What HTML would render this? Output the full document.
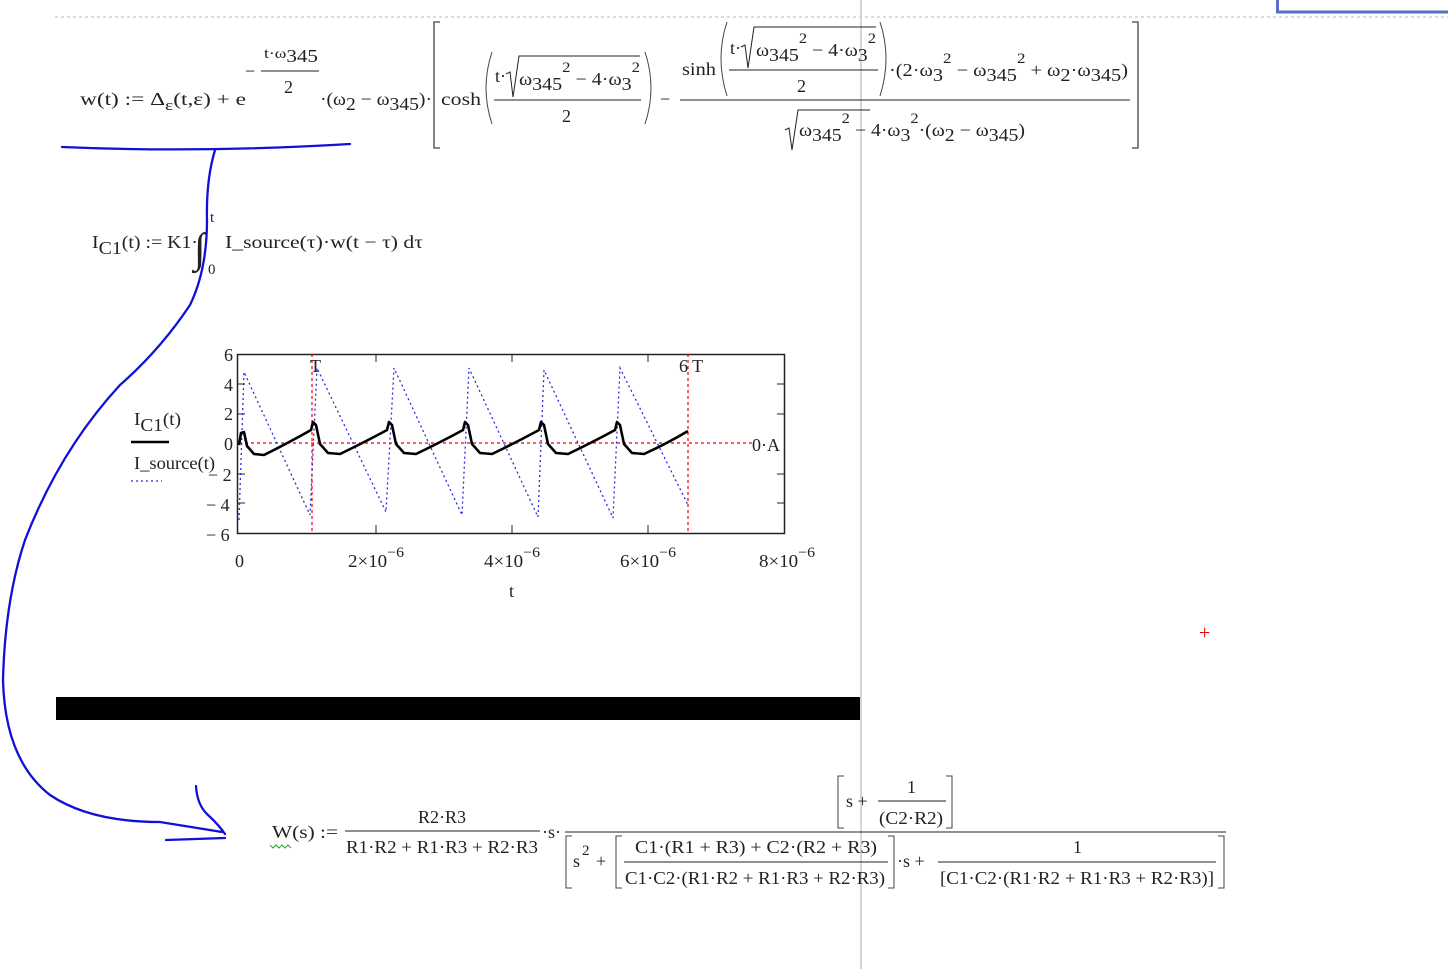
<!DOCTYPE html>
<html><head><meta charset="utf-8"><style>
html,body{margin:0;padding:0;background:#fff;width:1448px;height:969px;overflow:hidden}
svg{display:block}
text{font-family:"Liberation Serif",serif;fill:#222;font-size:18px}
.b{font-size:15px}
</style></head><body>
<svg width="1448" height="969" viewBox="0 0 1448 969" xmlns="http://www.w3.org/2000/svg">
<line x1="55" y1="17" x2="1448" y2="17" stroke="#bbb" stroke-dasharray="3,3"/>
<rect x="1277.5" y="-2" width="172" height="14" fill="#fff" stroke="#5a70c8" stroke-width="3"/>
<line x1="861" y1="0" x2="861" y2="969" stroke="#c8c8c8" stroke-width="1.5"/>

<!-- top formula -->
<text x="80" y="105" textLength="166" lengthAdjust="spacingAndGlyphs">w(t) := Δ<tspan dy="5" class="b">ε</tspan><tspan dy="-5">(t,ε) + e</tspan></text>
<text x="245" y="77">−</text>
<text x="264" y="58" textLength="54" lengthAdjust="spacingAndGlyphs"><tspan class="b">t·ω</tspan><tspan dy="4">345</tspan></text>
<line x1="261" y1="71" x2="319" y2="71" stroke="#222"/>
<text x="284" y="93">2</text>
<text x="320" y="105" textLength="112" lengthAdjust="spacingAndGlyphs">·(ω<tspan dy="5">2</tspan><tspan dy="-5"> − ω</tspan><tspan dy="5">345</tspan><tspan dy="-5">)·</tspan></text>
<path d="M440 22 L434 22 L434 148 L440 148" fill="none" stroke="#444" stroke-width="1.3"/>
<text x="441" y="105" textLength="40" lengthAdjust="spacingAndGlyphs">cosh</text>
<path d="M492 52 Q480 88 492 124" fill="none" stroke="#444"/>
<text x="495" y="82">t·</text>
<path d="M506 74 L510 72 L513 97 L519 56 L640 56" fill="none" stroke="#222"/>
<text x="519" y="85" textLength="121" lengthAdjust="spacingAndGlyphs">ω<tspan dy="5">345</tspan><tspan dy="-18" class="b">2</tspan><tspan dy="13"> − 4·ω</tspan><tspan dy="5">3</tspan><tspan dy="-18" class="b">2</tspan></text>
<line x1="494" y1="100" x2="641" y2="100" stroke="#222"/>
<text x="562" y="122">2</text>
<path d="M645 52 Q657 88 645 124" fill="none" stroke="#444"/>
<text x="660" y="105">−</text>
<text x="682" y="75" textLength="34" lengthAdjust="spacingAndGlyphs">sinh</text>
<path d="M727 22 Q715 58 727 96" fill="none" stroke="#444"/>
<text x="730" y="54">t·</text>
<path d="M741 47 L745 45 L748 68 L754 27 L876 27" fill="none" stroke="#222"/>
<text x="756" y="56" textLength="120" lengthAdjust="spacingAndGlyphs">ω<tspan dy="5">345</tspan><tspan dy="-18" class="b">2</tspan><tspan dy="13"> − 4·ω</tspan><tspan dy="5">3</tspan><tspan dy="-18" class="b">2</tspan></text>
<line x1="729" y1="70" x2="878" y2="70" stroke="#222"/>
<text x="797" y="92">2</text>
<path d="M880 22 Q892 58 880 96" fill="none" stroke="#444"/>
<text x="889" y="76" textLength="239" lengthAdjust="spacingAndGlyphs">·(2·ω<tspan dy="5">3</tspan><tspan dy="-18" class="b">2</tspan><tspan dy="13"> − ω</tspan><tspan dy="5">345</tspan><tspan dy="-18" class="b">2</tspan><tspan dy="13"> + ω</tspan><tspan dy="5">2</tspan><tspan dy="-5">·ω</tspan><tspan dy="5">345</tspan><tspan dy="-5">)</tspan></text>
<line x1="680" y1="100" x2="1130" y2="100" stroke="#222"/>
<path d="M785 130 L789 128 L792 150 L798 110 L870 110" fill="none" stroke="#222"/>
<text x="799" y="136" textLength="226" lengthAdjust="spacingAndGlyphs">ω<tspan dy="5">345</tspan><tspan dy="-18" class="b">2</tspan><tspan dy="13"> − 4·ω</tspan><tspan dy="5">3</tspan><tspan dy="-18" class="b">2</tspan><tspan dy="13">·(ω</tspan><tspan dy="5">2</tspan><tspan dy="-5"> − ω</tspan><tspan dy="5">345</tspan><tspan dy="-5">)</tspan></text>
<path d="M1132 22 L1138 22 L1138 148 L1132 148" fill="none" stroke="#444" stroke-width="1.3"/>

<!-- integral -->
<text x="92" y="248" textLength="106" lengthAdjust="spacingAndGlyphs">I<tspan dy="6">C1</tspan><tspan dy="-6">(t) := K1·</tspan></text>
<text x="194" y="262" style="font-size:42px">∫</text>
<text x="210" y="222" class="b">t</text><text x="208" y="274" class="b">0</text>
<text x="225" y="248" textLength="198" lengthAdjust="spacingAndGlyphs">I_source(τ)·w(t − τ) dτ</text>

<!-- plot -->
<rect x="237.5" y="354.5" width="547" height="179" fill="none" stroke="#222" stroke-width="1.5"/>
<g stroke="#222" stroke-width="1">
<line x1="237" y1="384" x2="245" y2="384"/><line x1="237" y1="414" x2="245" y2="414"/><line x1="237" y1="474" x2="245" y2="474"/><line x1="237" y1="503" x2="245" y2="503"/>
<line x1="777" y1="384" x2="785" y2="384"/><line x1="777" y1="414" x2="785" y2="414"/><line x1="777" y1="474" x2="785" y2="474"/><line x1="777" y1="503" x2="785" y2="503"/>
<line x1="376" y1="525" x2="376" y2="533"/><line x1="512" y1="525" x2="512" y2="533"/><line x1="648" y1="525" x2="648" y2="533"/>
<line x1="376" y1="354" x2="376" y2="362"/><line x1="512" y1="354" x2="512" y2="362"/><line x1="648" y1="354" x2="648" y2="362"/>
</g>
<g stroke="#e00" stroke-width="1.2" stroke-dasharray="3,3">
<line x1="239" y1="443" x2="755" y2="443"/>
<line x1="312" y1="354" x2="312" y2="533"/><line x1="688" y1="354" x2="688" y2="533"/>
</g>
<path d="M239,520 L244,372 L310,515 L317,368 L386,512 L394,368 L462,515 L469,368 L538,517 L544,370 L613,518 L620,368 L688,505" fill="none" stroke="#2a2ae0" stroke-width="1.3" stroke-dasharray="2,3"/>
<path d="M239,445 L241,433 L244,432 L247,446 L254,454 L264,455 Q290,442 311,430 L313,422 L316,425 L320,444 L328,453 L340,454 Q365,442 387,430 L389,422 L392,425 L396,444 L404,453 L416,454 Q441,442 463,430 L465,422 L468,425 L472,444 L480,453 L492,454 Q517,442 539,430 L541,422 L544,425 L548,444 L556,453 L568,454 Q593,442 615,430 L617,422 L620,425 L624,444 L632,453 L644,454 Q668,443 688,431" fill="none" stroke="#000" stroke-width="2.6" stroke-linejoin="round"/>
<text x="224" y="361">6</text><text x="224" y="391">4</text><text x="224" y="420">2</text><text x="224" y="450">0</text>
<text x="208" y="481">− 2</text><text x="206" y="511">− 4</text><text x="206" y="541">− 6</text>
<text x="310" y="372">T</text><text x="679" y="372">6 T</text><text x="752" y="451">0·A</text>
<text x="235" y="567">0</text>
<text x="348" y="567" textLength="56" lengthAdjust="spacingAndGlyphs">2×10<tspan dy="-10" class="b">−6</tspan></text>
<text x="484" y="567" textLength="56" lengthAdjust="spacingAndGlyphs">4×10<tspan dy="-10" class="b">−6</tspan></text>
<text x="620" y="567" textLength="56" lengthAdjust="spacingAndGlyphs">6×10<tspan dy="-10" class="b">−6</tspan></text>
<text x="759" y="567" textLength="56" lengthAdjust="spacingAndGlyphs">8×10<tspan dy="-10" class="b">−6</tspan></text>
<text x="509" y="597">t</text>
<text x="134" y="425" textLength="47" lengthAdjust="spacingAndGlyphs">I<tspan dy="6">C1</tspan><tspan dy="-6">(t)</tspan></text>
<text x="134" y="469" textLength="81" lengthAdjust="spacingAndGlyphs">I_source(t)</text>
<line x1="131" y1="442" x2="169" y2="442" stroke="#000" stroke-width="2.5"/>
<line x1="131" y1="481" x2="162" y2="481" stroke="#2a2ae0" stroke-width="1.3" stroke-dasharray="2,3"/>

<rect x="56" y="697" width="804" height="23" fill="#000"/>
<text x="1199" y="639" style="font-size:20px;fill:#e00">+</text>

<!-- W(s) -->
<text x="272" y="838" textLength="66" lengthAdjust="spacingAndGlyphs">W(s) :=</text>
<path d="M270 845 l3 3 l3 -3 l3 3 l3 -3 l3 3 l3 -3 l3 3" fill="none" stroke="#2a2" stroke-width="1"/>
<text x="418" y="823" textLength="48" lengthAdjust="spacingAndGlyphs">R2·R3</text>
<line x1="345" y1="831" x2="540" y2="831" stroke="#222"/>
<text x="346" y="853" textLength="192" lengthAdjust="spacingAndGlyphs">R1·R2 + R1·R3 + R2·R3</text>
<text x="542" y="838">·s·</text>
<path d="M844 776 L838 776 L838 828 L844 828" fill="none" stroke="#444"/>
<text x="846" y="807">s +</text>
<text x="907" y="793">1</text>
<line x1="878" y1="801" x2="946" y2="801" stroke="#222"/>
<text x="879" y="824" textLength="64" lengthAdjust="spacingAndGlyphs">(C2·R2)</text>
<path d="M946 776 L952 776 L952 828 L946 828" fill="none" stroke="#444"/>
<line x1="565" y1="832" x2="1226" y2="832" stroke="#222"/>
<path d="M572 836 L566 836 L566 888 L572 888" fill="none" stroke="#444"/>
<text x="573" y="867">s</text><text x="582" y="855" class="b">2</text><text x="596" y="867">+</text>
<path d="M622 836 L616 836 L616 888 L622 888" fill="none" stroke="#444"/>
<text x="635" y="853" textLength="242" lengthAdjust="spacingAndGlyphs">C1·(R1 + R3) + C2·(R2 + R3)</text>
<line x1="624" y1="862" x2="888" y2="862" stroke="#222"/>
<text x="625" y="884" textLength="260" lengthAdjust="spacingAndGlyphs">C1·C2·(R1·R2 + R1·R3 + R2·R3)</text>
<path d="M888 836 L894 836 L894 888 L888 888" fill="none" stroke="#444"/>
<text x="897" y="867">·s +</text>
<text x="1073" y="853">1</text>
<line x1="938" y1="862" x2="1216" y2="862" stroke="#222"/>
<text x="940" y="884" textLength="274" lengthAdjust="spacingAndGlyphs">[C1·C2·(R1·R2 + R1·R3 + R2·R3)]</text>
<path d="M1218 836 L1224 836 L1224 888 L1218 888" fill="none" stroke="#444"/>

<!-- hand drawn blue -->
<g fill="none" stroke="#1010d8" stroke-width="2.3" stroke-linecap="round">
<path d="M62 147 Q200 153 350 144"/>
<path d="M215 150 Q206 180 207 220 Q207 270 190 305 Q160 350 120 385 Q60 450 25 540 Q5 600 3 680 Q5 760 50 795 Q90 822 160 822 L222 832"/>
<path d="M196 786 Q197 805 208 815 Q218 824 225 834"/>
<path d="M166 840 L225 838"/>
</g>
</svg>
</body></html>
